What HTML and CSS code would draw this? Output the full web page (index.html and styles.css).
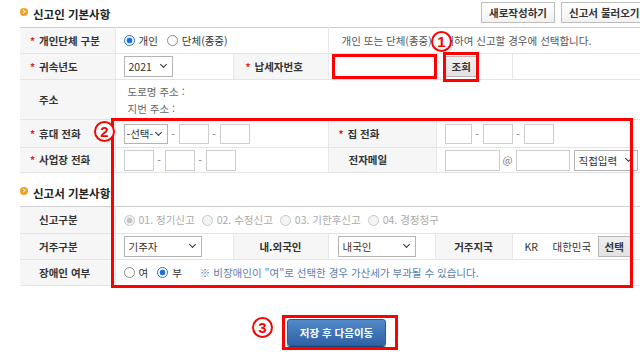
FILE: index.html
```html
<!DOCTYPE html>
<html lang="ko">
<head>
    <meta charset="UTF-8">
    <title>신고인 기본사항</title>
    <link rel="stylesheet" href="styles.css">
</head>
<body>
    <div class="page">
        <div class="sec-head">
            <h2 class="sec-title"><span class="dot"></span>신고인 기본사항</h2>
            <div class="top-btns">
                <button class="btn-top">새로작성하기</button>
                <button class="btn-top">신고서 불러오기</button>
            </div>
        </div>

        <table class="grid">
            <colgroup>
                <col style="width:95px"><col style="width:118px"><col style="width:95px">
                <col style="width:108px"><col style="width:76px"><col style="width:168px">
            </colgroup>
            <tr class="h26">
                <th class="req">개인단체 구분</th>
                <td colspan="2">
                    <div class="line">
                        <label class="opt"><input type="radio" class="rd" name="kind" checked>개인</label>
                        <label class="opt"><input type="radio" class="rd" name="kind">단체(종중)</label>
                    </div>
                </td>
                <td colspan="3" class="desc">개인 또는 단체(종중)에 대하여 신고할 경우에 선택합니다.</td>
            </tr>
            <tr class="h26">
                <th class="req">귀속년도</th>
                <td><span class="sel w49"><select><option>2021</option></select></span></td>
                <th class="req pad12">납세자번호</th>
                <td colspan="2" class="pad5">
                    <div class="line">
                        <input type="text" class="ipt w103">
                        <button class="btn-gray">조회</button>
                    </div>
                </td>
                <td></td>
            </tr>
            <tr class="h40">
                <th>주소</th>
                <td colspan="5" class="addr">
                    <div>도로명 주소 :</div>
                    <div>지번 주소 :</div>
                </td>
            </tr>
            <tr class="h28">
                <th class="req">휴대 전화</th>
                <td colspan="2">
                    <div class="line">
                        <span class="sel w44"><select><option>-선택-</option></select></span>
                        <span class="dash">-</span><input type="text" class="ipt w30">
                        <span class="dash">-</span><input type="text" class="ipt w30">
                    </div>
                </td>
                <th class="req">집 전화</th>
                <td colspan="2">
                    <div class="line">
                        <input type="text" class="ipt w27">
                        <span class="dash">-</span><input type="text" class="ipt w30">
                        <span class="dash">-</span><input type="text" class="ipt w30">
                    </div>
                </td>
            </tr>
            <tr class="h25">
                <th class="req">사업장 전화</th>
                <td colspan="2">
                    <div class="line">
                        <input type="text" class="ipt w30 tall">
                        <span class="dash">-</span><input type="text" class="ipt w30 tall">
                        <span class="dash">-</span><input type="text" class="ipt w30 tall">
                    </div>
                </td>
                <th class="pad20">전자메일</th>
                <td colspan="2">
                    <div class="line">
                        <input type="text" class="ipt w55 tall">
                        <span class="at">@</span>
                        <input type="text" class="ipt w54 tall">
                        <span class="sel w64"><select class="tall"><option>직접입력</option></select></span>
                    </div>
                </td>
            </tr>
        </table>

        <div class="sec-head sec-head2">
            <h2 class="sec-title"><span class="dot"></span>신고서 기본사항</h2>
        </div>

        <table class="grid">
            <colgroup>
                <col style="width:95px"><col style="width:118px"><col style="width:95px">
                <col style="width:107px"><col style="width:77px"><col style="width:168px">
            </colgroup>
            <tr class="h27">
                <th>신고구분</th>
                <td colspan="5" class="muted">
                    <div class="line">
                        <label class="opt"><input type="radio" class="rd" name="rpt" checked disabled>01. 정기신고</label>
                        <label class="opt"><input type="radio" class="rd" name="rpt" disabled>02. 수정신고</label>
                        <label class="opt"><input type="radio" class="rd" name="rpt" disabled>03. 기한후신고</label>
                        <label class="opt"><input type="radio" class="rd" name="rpt" disabled>04. 경정청구</label>
                    </div>
                </td>
            </tr>
            <tr class="h26">
                <th>거주구분</th>
                <td><span class="sel w78"><select><option>기주자</option></select></span></td>
                <th class="center">내.외국인</th>
                <td class="pad9"><span class="sel w78"><select><option>내국인</option></select></span></td>
                <th class="center">거주지국</th>
                <td>
                    <div class="line country">
                        <span class="code">KR</span>
                        <span class="cname">대한민국</span>
                        <button class="btn-gray">선택</button>
                    </div>
                </td>
            </tr>
            <tr class="h26">
                <th>장애인 여부</th>
                <td colspan="5">
                    <div class="line">
                        <label class="opt"><input type="radio" class="rd" name="dis">여</label>
                        <label class="opt"><input type="radio" class="rd" name="dis" checked>부</label>
                        <span class="note">※ 비장애인이 "여"로 선택한 경우 가산세가 부과될 수 있습니다.</span>
                    </div>
                </td>
            </tr>
        </table>

        <div class="actions">
            <button class="btn-save">저장 후 다음이동</button>
        </div>
    </div>

    <!-- 안내용 표시 -->
    <div class="mark box-a"></div>
    <div class="mark box-b"></div>
    <div class="num num1">1</div>
    <div class="mark box-c"></div>
    <div class="num num2">2</div>
    <div class="mark box-d"></div>
    <div class="num num3">3</div>
</body>
</html>
```

FILE: styles.css
```css
body {
    margin: 0;
    width: 640px;
    height: 354px;
    overflow: hidden;
    position: relative;
    background: #fff;
    font-family: "Noto Sans CJK KR", "Noto Sans", sans-serif;
    font-size: 10.5px;
    color: #333;
}

.page {
    width: 660px;
    padding-left: 20px;
}

/* 섹션 제목 */
.sec-head {
    height: 27px;
    display: flex;
    align-items: center;
}

.sec-head2 {
    height: 27px;
    padding-top: 5px;
    margin-top: 1px;
}

.sec-title {
    margin: 0;
    font-size: 11.5px;
    font-weight: bold;
    color: #222;
    display: flex;
    align-items: center;
    line-height: 14px;
    width: 461px;
    flex: none;
}

.dot {
    width: 8px;
    height: 8px;
    border-radius: 50%;
    background: #f0a028;
    margin-right: 5px;
    margin-top: -4px;
    position: relative;
}

.dot::after {
    content: "";
    position: absolute;
    left: 2px;
    top: 2.5px;
    width: 2px;
    height: 2px;
    border-right: 1px solid #fff;
    border-top: 1px solid #fff;
    transform: rotate(45deg);
}

.top-btns {
    display: flex;
    gap: 6px;
    align-self: flex-start;
    margin-top: 2px;
    flex: none;
}

.btn-top {
    height: 21px;
    padding: 0 7px;
    border: 1px solid #bdbdbd;
    background: linear-gradient(#fff, #f1f1f1);
    font-family: inherit;
    font-size: 10.5px;
    font-weight: bold;
    color: #333;
    white-space: nowrap;
}

/* 입력표 */
.grid {
    width: 660px;
    border-collapse: collapse;
    table-layout: fixed;
    border-top: 1px solid #cfcfcf;
}

.grid th,
.grid td {
    border-bottom: 1px solid #e4e4e4;
    border-left: 1px solid #e8e8e8;
    padding: 0 0 0 8px;
    white-space: nowrap;
    line-height: 14px;
    text-align: left;
}

.grid th:first-child {
    border-left: none;
}

.grid th {
    background: #f6f6f6;
    font-weight: bold;
    color: #333;
    padding-left: 19px;
}

.grid th.req {
    padding-left: 10px;
}

.grid th.req::before {
    content: "*";
    display: inline-block;
    width: 9px;
    color: #e02020;
    font-size: 10px;
    vertical-align: top;
}

.grid th.pad12 { padding-left: 12px; }
.grid th.pad20 { padding-left: 20px; }
.grid th.center { text-align: center; padding-left: 0; }
.grid td.pad5 { padding-left: 5px; }
.grid td.pad9 { padding-left: 9px; }

.h25 td, .h25 th { height: 24px; }
.h26 td, .h26 th { height: 25px; }
.h27 td, .h27 th { height: 26px; }
.h28 td, .h28 th { height: 27px; }
.h40 td, .h40 th { height: 39px; }

.line {
    display: flex;
    align-items: center;
}

.desc {
    color: #555;
    padding-left: 13px !important;
}

.addr {
    color: #666;
    padding-left: 12px !important;
}

.addr div {
    line-height: 17px;
}

/* 라디오 */
.opt {
    display: inline-flex;
    align-items: center;
    margin-right: 9px;
}

.rd {
    appearance: none;
    width: 11px;
    height: 11px;
    margin: 0 4px 0 0;
    border: 1px solid #8c8c8c;
    border-radius: 50%;
    background: #fff;
}

.rd:checked {
    border-color: #1c6fdc;
    background: radial-gradient(circle, #1c6fdc 0 2.6px, #fff 3.2px);
}

.rd:disabled {
    border-color: #c8c8c8;
    background: #f4f4f4;
}

.rd:disabled:checked {
    background: radial-gradient(circle, #c4c4c4 0 2.6px, #f4f4f4 3.2px);
}

.muted {
    color: #aaa;
}

.muted .opt {
    margin-right: 7px;
}

/* 입력칸 */
.ipt {
    height: 20px;
    box-sizing: border-box;
    border: 1px solid #cdcdcd;
    padding: 0 3px;
    margin: 0;
    font-family: inherit;
    font-size: 10.5px;
}

.ipt.tall { height: 21px; }
.w27 { width: 27px; }
.w30 { width: 30px; }
.w54 { width: 54px; }
.w55 { width: 55px; }
.w103 { width: 103px; height: 21px; }

.dash {
    width: 11px;
    text-align: center;
    color: #777;
}

.at {
    width: 16px;
    text-align: center;
    color: #777;
}

.sel {
    position: relative;
    display: inline-block;
    vertical-align: middle;
}

.sel select {
    appearance: none;
    width: 100%;
    height: 21px;
    box-sizing: border-box;
    border: 1px solid #b4b4b4;
    background: #fff;
    padding: 0 0 0 4px;
    margin: 0;
    font-family: inherit;
    font-size: 10.5px;
    color: #333;
}

.sel::after {
    content: "";
    position: absolute;
    right: 7px;
    top: 6px;
    width: 4px;
    height: 4px;
    border-right: 1.5px solid #333;
    border-bottom: 1.5px solid #333;
    transform: rotate(45deg);
    pointer-events: none;
}

.w44 { width: 44px; }
.w44 select { height: 20px; padding-left: 2px; }
.w49 { width: 49px; }
.w64 { width: 64px; margin-left: 4px; }
.w78 { width: 78px; }

.btn-gray {
    height: 21px;
    padding: 0 6px;
    border: 1px solid #b8b8b8;
    background: linear-gradient(#f0f0f0, #e2e2e2);
    font-family: inherit;
    font-size: 10.5px;
    font-weight: bold;
    color: #333;
    margin-left: 8px;
}

.country .code {
    width: 28px;
    padding-left: 4px;
}

.country .cname {
    width: 40px;
}

.country .btn-gray {
    margin-left: 5px;
}

.note {
    color: #5a7db4;
    margin-left: 9px;
}

/* 저장 버튼 */
.actions {
    display: flex;
    padding-left: 267px;
    margin-top: 33px;
}

.btn-save {
    width: 99px;
    height: 27px;
    border: 1px solid #2b5b98;
    border-radius: 3px;
    background: linear-gradient(#5189c9, #2f62a5);
    box-shadow: 0 1px 0 #1e4577;
    color: #fff;
    font-family: inherit;
    font-size: 10.5px;
    font-weight: bold;
}

/* 빨간 안내 표시 */
.mark {
    position: absolute;
    border: 3px solid #f00;
    box-sizing: border-box;
}

.box-a { left: 332px; top: 54px; width: 105px; height: 25px; }
.box-b { left: 443px; top: 52px; width: 36px; height: 30px; }
.box-c { left: 111px; top: 118px; width: 522px; height: 170px; }
.box-d { left: 282px; top: 315px; width: 116px; height: 35px; }

.num {
    position: absolute;
    width: 21px;
    height: 21px;
    box-sizing: border-box;
    border: 2px solid #f00;
    border-radius: 50%;
    background: #fff;
    color: #f00;
    font-family: "Liberation Sans", sans-serif;
    font-weight: bold;
    font-size: 15px;
    line-height: 17px;
    text-align: center;
}

.num1 { left: 431px; top: 31px; }
.num2 { left: 94px; top: 121px; }
.num3 { left: 252px; top: 317px; }
```
